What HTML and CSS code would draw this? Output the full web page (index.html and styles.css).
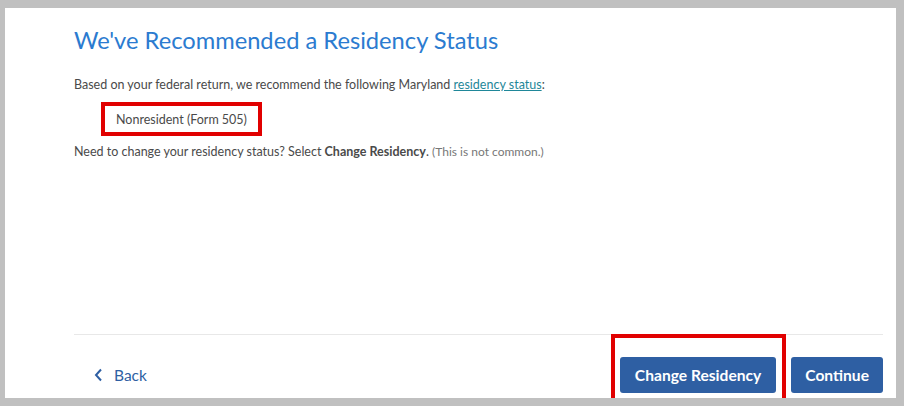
FILE: index.html
```html
<!DOCTYPE html>
<html>
<head>
  <title>Residency Status</title>
  <link rel="stylesheet" href="styles.css">
</head>
<body>
  <div class="panel">
    <div class="content">
      <h1>We've Recommended a Residency Status</h1>
      <p>Based on your federal return, we recommend the following Maryland <a href="#">residency status</a>:</p>
      <div class="status">Nonresident (Form 505)</div>
      <p>Need to change your residency status? Select <b>Change Residency</b>. <span class="note">(This is not common.)</span></p>
    </div>
    <div class="footer">
      <a class="back" href="#">
        <svg width="9" height="14" viewBox="0 0 9 14"><path d="M7 1.5 L2 7 L7 12.5" fill="none" stroke="#2e5fa3" stroke-width="2"/></svg>
        Back
      </a>
      <div class="actions">
        <div class="highlight">
          <button class="btn">Change Residency</button>
        </div>
        <button class="btn">Continue</button>
      </div>
    </div>
  </div>
</body>
</html>
```

FILE: styles.css
```css
body {
  margin: 8px 8px 8px 5px;
  background-color: #c0c0c0;
  font-family: Lato, "Open Sans", sans-serif;
  color: #4a4a4a;
}

.panel {
  background-color: #fff;
  height: 390px;
  display: flex;
  flex-direction: column;
  padding: 0 13px 0 69px;
}

.content {
  flex: 1;
}

h1 {
  margin: 18px 0 23px;
  font-size: 23.7px;
  font-weight: 400;
  color: #2b7bd0;
}

p {
  margin: 0;
  font-size: 12.5px;
}

a {
  color: #1f8799;
}

.status {
  display: inline-block;
  margin: 10px 0 8px 27px;
  padding: 6px 11px 5px;
  border: 4px solid #e10000;
  font-size: 12.5px;
}

.note {
  font-size: 12px;
  color: #777;
}

.footer {
  border-top: 1px solid #e8e8e8;
  display: flex;
  justify-content: space-between;
  align-items: center;
  padding: 22px 0 5px;
}

.back {
  display: flex;
  align-items: center;
  gap: 11px;
  margin-left: 20px;
  color: #2e5fa3;
  text-decoration: none;
  font-size: 15.5px;
}

.actions {
  display: flex;
  gap: 15px;
}

.highlight {
  position: relative;
}

.highlight::after {
  content: "";
  position: absolute;
  left: -9px;
  right: -10px;
  top: -23px;
  bottom: -13px;
  border: 4px solid #e10000;
}

.btn {
  height: 36px;
  padding: 0 15px;
  border: none;
  border-radius: 3px;
  background-color: #2e5fa3;
  color: #fff;
  font-family: Lato, "Open Sans", sans-serif;
  font-size: 15.6px;
  font-weight: 700;
}

.actions > .btn {
  padding: 0 14px;
}
```
